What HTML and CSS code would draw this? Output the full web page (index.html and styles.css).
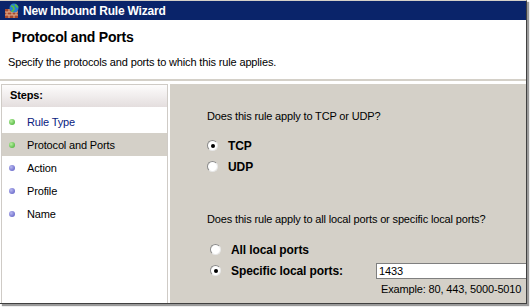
FILE: index.html
```html
<!DOCTYPE html>
<html>
<head>
    <link rel="stylesheet" href="styles.css">
    <title>New Inbound Rule Wizard</title>
</head>
<body>

    <div class="window">
      <div class="titlebar">
        <svg class="appicon" width="16" height="16" viewBox="0 0 16 16">
          <rect x="1" y="6" width="13" height="9" fill="#a8482c"/>
          <path d="M1 9h13M1 12h13M5 6v3M10 6v3M3 9v3M8 9v3M12 9v3M5 12v3M10 12v3" stroke="#e0b090" stroke-width="1"/>
          <circle cx="10" cy="5" r="4.5" fill="#2a7fd0"/>
          <path d="M7 3c2 0 3 1 3 3s-2 1-2 3M11 1.5c1 1 2 1.5 3 3" stroke="#58c040" stroke-width="1.6" fill="none"/>
        </svg>
        <span>New Inbound Rule Wizard</span>
      </div>

      <div class="header">
        <h1>Protocol and Ports</h1>
        <p>Specify the protocols and ports to which this rule applies.</p>
      </div>

      <div class="main">
        <div class="steps">
          <div class="steps-head">Steps:</div>
          <ul>
            <li class="done link"><i></i>Rule Type</li>
            <li class="done current"><i></i>Protocol and Ports</li>
            <li><i></i>Action</li>
            <li><i></i>Profile</li>
            <li><i></i>Name</li>
          </ul>
        </div>

        <div class="content">
          <p class="question">Does this rule apply to TCP or UDP?</p>
          <div class="option"><span class="radio on"></span>TCP</div>
          <div class="option"><span class="radio"></span>UDP</div>

          <p class="question second">Does this rule apply to all local ports or specific local ports?</p>
          <div class="option indent"><span class="radio"></span>All local ports</div>
          <div class="option indent port-row">
            <span class="radio on"></span><span class="port-label">Specific local ports:</span>
            <span class="textbox">1433</span>
          </div>
          <div class="example">Example: 80, 443, 5000-5010</div>
        </div>
      </div>
    </div>

</body>
</html>
```

FILE: styles.css
```css
/* general styling */
* {
  box-sizing: border-box;
  margin: 0;
  padding: 0;
}

html, body {
  height: 100%;
}

body {
  background-color: #fff;
  font-family: "Liberation Sans", Arial, sans-serif;
  font-size: 11px;
  letter-spacing: -.15px;
  color: #000;
  overflow: hidden;
}

.window {
  width: 527px;
  height: 304px;
  border-top: 1px solid #d4d0c8;
  border-right: 1px solid #404040;
  border-bottom: 1px solid #404040;
  box-shadow: 2px 2px 1px #9a9a9a;
  display: flex;
  flex-direction: column;
  overflow: hidden;
}

.titlebar {
  height: 19px;
  background-color: #0a246a;
  color: #fff;
  display: flex;
  align-items: center;
  padding-left: 4px;
  font-weight: bold;
  font-size: 12px;
  letter-spacing: -.2px;
}

.appicon {
  margin-right: 3px;
}

.header {
  height: 61px;
  background-color: #fff;
  border-bottom: 2px solid #d4d0c8;
  padding: 9px 0 0 12px;
}

.header h1 {
  font-size: 14px;
  font-weight: bold;
  letter-spacing: -.2px;
}

.header p {
  margin: 11px 0 0 -4px;
}

.main {
  flex: 1;
  display: flex;
  background-color: #fff;
  padding-top: 3px;
}

.steps {
  width: 167px;
  border-left: 1px solid #cfcbc6;
  border-right: 1px solid #cfcbc6;
  border-top: 1px solid #cfcbc6;
  margin-left: 1px;
  background-color: #fff;
}

.steps-head {
  height: 22px;
  background: linear-gradient(#fdfcfc, #e4dede);
  font-weight: bold;
  font-size: 11px;
  padding: 4px 0 0 8px;
}

.steps ul {
  list-style-type: none;
  padding-top: 3px;
}

.steps li {
  height: 23px;
  display: flex;
  align-items: center;
  padding-left: 7px;
}

.steps li i {
  width: 6px;
  height: 6px;
  border-radius: 50%;
  background: radial-gradient(circle at 35% 35%, #b8b8f0, #5555c0);
  margin-right: 12px;
}

.steps li.done i {
  background: radial-gradient(circle at 35% 35%, #b8f0a0, #38a828);
}

.steps li.link {
  color: #0a1a80;
}

.steps li.current {
  background-color: #d4d0c8;
}

.content {
  flex: 1;
  background-color: #d4d0c8;
  margin-left: 2px;
  padding: 26px 0 0 37px;
}

.question {
  margin-bottom: 13px;
}

.question.second {
  margin-top: 36px;
  margin-bottom: 14px;
}

.option {
  display: flex;
  align-items: center;
  height: 21px;
  font-weight: bold;
  font-size: 12px;
  letter-spacing: -.1px;
}

.option.indent {
  padding-left: 3px;
}

.radio {
  width: 11px;
  height: 11px;
  border-radius: 50%;
  background-color: #fff;
  border: 1px solid #8a8a8a;
  border-right-color: #e8e8e8;
  border-bottom-color: #e8e8e8;
  margin-right: 10px;
  position: relative;
}

.radio.on::after {
  content: "";
  position: absolute;
  left: 2.5px;
  top: 2.5px;
  width: 4px;
  height: 4px;
  border-radius: 50%;
  background-color: #000;
}

.port-label {
  width: 145px;
}

.textbox {
  flex: 1;
  height: 16px;
  background-color: #fff;
  border: 1px solid #7f7f7f;
  border-right: none;
  font-weight: normal;
  font-size: 11px;
  padding-left: 2px;
  line-height: 14px;
}

.example {
  margin: 2px 0 0 174px;
}
```
